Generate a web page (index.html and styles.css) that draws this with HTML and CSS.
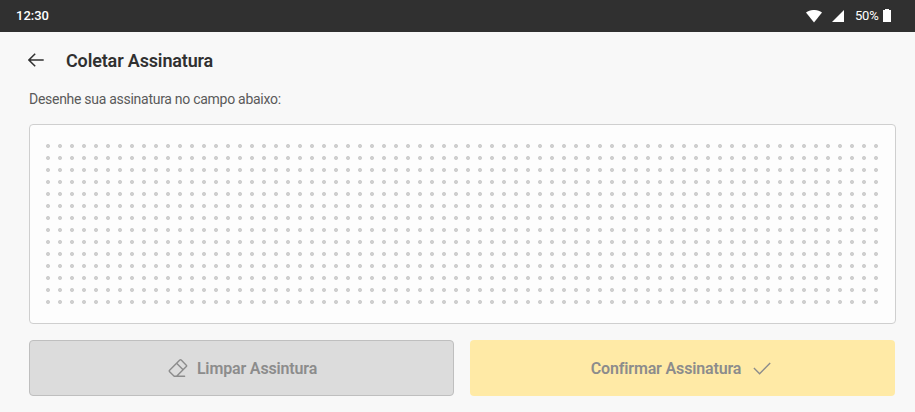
FILE: index.html
```
<!DOCTYPE html>
<html lang="pt-BR">
<head>
    <meta charset="UTF-8">
    <meta name="viewport" content="width=device-width, initial-scale=1.0">
    <title>Coletar Assinatura</title>
    <link rel="stylesheet" href="styles.css">
</head>
<body>
    <div class="status-bar">
        <span class="clock">12:30</span>
        <div class="status-icons">
            <svg class="wifi" width="16" height="13" viewBox="0 0 16 13"><path d="M0 2.6C4.6-.9 11.4-.9 16 2.6L8 12.6z" fill="#fff"/></svg>
            <svg class="signal" width="12" height="12" viewBox="0 0 12 12"><path d="M12 0v12H0z" fill="#fff"/></svg>
            <span class="percent">50%</span>
            <svg class="battery" width="8" height="13" viewBox="0 0 8 13"><path d="M2 0h4v1h2v12H0V1h2z" fill="#fff"/></svg>
        </div>
    </div>
    <main>
        <header>
            <svg class="back" width="16" height="14" viewBox="0 0 16 14"><path d="M7.2.7L.9 7l6.3 6.3M.9 7h14.8" fill="none" stroke="#303030" stroke-width="1.5"/></svg>
            <h1>Coletar Assinatura</h1>
        </header>
        <p>Desenhe sua assinatura no campo abaixo:</p>
        <div class="signature-field">
            <div class="dots"></div>
        </div>
        <div class="actions">
            <button class="clear" disabled>
                <svg width="20" height="20" viewBox="0 0 20 20" fill="none" stroke="#8c8c8c" stroke-width="1.4" stroke-linejoin="round" stroke-linecap="round"><path d="M6.2 18.3L1.6 13.7a1 1 0 0 1 0-1.4L11.8 2.1a1 1 0 0 1 1.4 0l5.1 5.1a1 1 0 0 1 0 1.4L8.6 18.3zM8.6 5.3l6.5 6.5M8.6 18.3h8"/></svg>
                <span>Limpar Assintura</span>
            </button>
            <button class="confirm" disabled>
                <span>Confirmar Assinatura</span>
                <svg width="18" height="13" viewBox="0 0 18 13"><path d="M.9 6.1l5.7 5.6L17.2 1" fill="none" stroke="#8c8c8c" stroke-width="1.4"/></svg>
            </button>
        </div>
    </main>
</body>
</html>
```
FILE: styles.css
```
* {
    box-sizing: border-box;
}
body {
    margin: 0;
    height: 412px;
    overflow: hidden;
    font-family: Roboto, sans-serif;
    background-color: #f8f8f8;
    color: #303030;
}
svg {
    display: block;
    flex: none;
}
.status-bar {
    display: flex;
    justify-content: space-between;
    height: 32px;
    padding: 0 24px 0 16px;
    background-color: #303030;
    color: #fff;
    line-height: 32px;
}
.clock {
    font-size: 13px;
    font-weight: 500;
}
.status-icons {
    display: flex;
    align-items: center;
    font-size: 13px;
}
.signal {
    margin: 0 11px 0 10px;
}
.percent {
    width: 24px;
    margin-right: 4px;
    letter-spacing: -0.2px;
}
.battery {
    margin-top: -2px;
}
main {
    padding: 16px 19px 16px 29px;
}
header {
    display: flex;
    align-items: center;
    height: 24px;
    margin-top: 1px;
}
.back {
    margin: -3px 22px 0 -1px;
}
h1 {
    margin: 0;
    font-size: 18px;
    font-weight: 600;
    line-height: 24px;
    letter-spacing: -0.15px;
}
p {
    height: 20px;
    margin: 16px 0 15px;
    font-size: 14px;
    line-height: 20px;
    letter-spacing: -0.28px;
    color: #5a5a5a;
}
.signature-field {
    height: 200px;
    padding: 15px 12px;
    border: 1px solid #cfcfcf;
    border-radius: 4px;
    background-color: #fdfdfd;
}
.dots {
    width: 840px;
    height: 168px;
    background-image: radial-gradient(circle, #cfcfcf 1.7px, transparent 2.3px);
    background-size: 12px 12px;
}
.actions {
    display: flex;
    gap: 16px;
    margin-top: 16px;
}
button {
    display: flex;
    align-items: center;
    justify-content: center;
    width: 425px;
    height: 56px;
    padding: 0;
    border: none;
    border-radius: 4px;
    font-family: inherit;
    font-size: 16px;
    font-weight: 600;
    letter-spacing: -0.15px;
    color: #8c8c8c;
}
.clear {
    gap: 9px;
    padding-left: 2px;
    border: 1px solid #bfbfbf;
    background-color: #dcdcdc;
}
.confirm {
    gap: 12px;
    padding-right: 3px;
    background-color: #ffeaa6;
}
```
